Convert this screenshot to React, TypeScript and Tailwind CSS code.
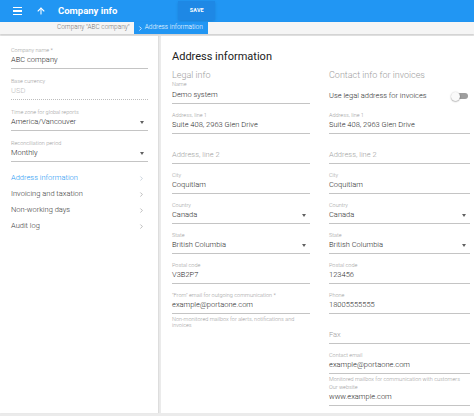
import { ArrowUp, ChevronRight } from "lucide-react";

type FieldProps = {
    label?: string;
    value?: string;
    placeholder?: string;
    select?: boolean;
    disabled?: boolean;
    dotted?: boolean;
    pad?: string;
    gap?: string;
};

function Field({ label, value, placeholder, select, disabled, dotted, pad = "pt-[7px]", gap = "mt-[1px]" }: FieldProps) {
    return (
        <div className={`${pad} pb-[3px] border-b ${dotted ? "border-dotted border-[#bdbdbd]" : "border-[#c4c4c4]"}`}>
            <div className="h-[8px] text-[5.5px] leading-[8px] font-light text-[#9e9e9e] whitespace-nowrap">{label}</div>
            <div className={`${gap} h-[10px] flex items-center justify-between text-[7.5px] leading-[10px] font-light`}>
                {placeholder ? (
                    <span className="text-[#a0a0a0]">{placeholder}</span>
                ) : (
                    <span className={disabled ? "text-[#bdbdbd]" : "text-[#2a2a2a]"}>{value}</span>
                )}
                {select && (
                    <span className="mr-[4px] w-0 h-0 border-l-[2.5px] border-r-[2.5px] border-t-[3px] border-l-transparent border-r-transparent border-t-[#616161]" />
                )}
            </div>
        </div>
    );
}

const nav = ["Address information", "Invoicing and taxation", "Non-working days", "Audit log"];

export default function App() {
    return (
        <div className="w-[474px] h-[416px] overflow-hidden flex flex-col bg-[#ebebeb] font-[Roboto,sans-serif]">
            {/* top bar */}
            <div className="h-[22px] bg-[#2196f3] flex items-center shrink-0">
                <div className="ml-[13px] w-[9px] flex flex-col gap-[2px]">
                    <span className="h-[1.5px] bg-white" />
                    <span className="h-[1.5px] bg-white" />
                    <span className="h-[1.5px] bg-white" />
                </div>
                <ArrowUp className="ml-[14px] text-white" size={10} strokeWidth={2.6} />
                <span className="ml-[12px] text-[9.5px] font-bold text-white">Company info</span>
                <button className="ml-[61px] h-[19px] w-[37px] self-start mt-[1px] bg-[#1e88e5] shadow-sm text-white text-[5.5px] font-bold tracking-wide">
                    SAVE
                </button>
            </div>

            {/* breadcrumbs */}
            <div className="h-[12px] bg-[#f5f5f5] flex items-center shrink-0 shadow-[0_1px_2px_rgba(0,0,0,0.15)] text-[6.5px] font-light">
                <span className="ml-[57px] text-[#757575]">Company "ABC company"</span>
                <div className="ml-[4px] h-full w-[74px] bg-[#2196f3] flex items-center text-white">
                    <ChevronRight className="ml-[3px]" size={7} strokeWidth={2.5} />
                    <span className="ml-[1px]">Address information</span>
                </div>
            </div>

            <div className="flex-1 flex gap-[3px] pt-[2px] pb-[3px]">
                {/* left panel */}
                <div className="w-[158px] bg-white pt-[2px] pl-[11px] pr-[10px] shadow-[1px_0_1px_rgba(0,0,0,0.06)]">
                    <Field pad="pt-[8px]" label="Company name *" value="ABC company" />
                    <Field pad="pt-[8px]" label="Base currency" value="USD" disabled dotted />
                    <Field pad="pt-[8px]" label="Time zone for global reports" value="America/Vancouver" select />
                    <Field pad="pt-[8px]" label="Reconciliation period" value="Monthly" select />
                    <div className="mt-[8px]">
                        {nav.map((item, i) => (
                            <div key={item} className="h-[16px] flex items-center justify-between text-[7.5px] font-light">
                                <span className={i === 0 ? "text-[#2196f3]" : "text-[#3a3a3a]"}>{item}</span>
                                <ChevronRight
                                    className={`mr-[3px] ${i === 0 ? "text-[#90a4b8]" : "text-[#757575]"}`}
                                    size={7}
                                    strokeWidth={1.6}
                                />
                            </div>
                        ))}
                    </div>
                </div>

                {/* main panel */}
                <div className="flex-1 bg-white pt-[14px] pl-[11px]">
                    <div className="h-[14px] text-[11px] leading-[14px] text-[#212121]">Address information</div>
                    <div className="mt-[6px] flex gap-[19px]">
                        <div className="w-[138px]">
                            <div className="h-[10px] text-[9px] leading-[10px] font-light text-[#9e9e9e]">Legal info</div>
                            <Field pad="pt-0" gap="mt-[2px]" label="Name" value="Demo system" />
                            <Field label="Address, line 1" value="Suite 408, 2963 Glen Drive" />
                            <Field placeholder="Address, line 2" />
                            <Field label="City" value="Coquitlam" />
                            <Field label="Country" value="Canada" select />
                            <Field label="State" value="British Columbia" select />
                            <Field label="Postal code" value="V3B2P7" />
                            <Field label={"\"From\" email for outgoing communication *"} value="example@portaone.com" />
                            <div className="pt-[2px] text-[5.5px] leading-[6px] font-light text-[#9e9e9e]">
                                Non-monitored mailbox for alerts, notifications and invoices
                            </div>
                        </div>
                        <div className="w-[141px]">
                            <div className="h-[10px] text-[9px] leading-[10px] font-light text-[#9e9e9e] whitespace-nowrap">
                                Contact info for invoices
                            </div>
                            <div className="pt-[10px] pb-[2px] h-[24px] flex items-center justify-between">
                                <span className="text-[7.5px] leading-[12px] font-light text-[#2a2a2a]">Use legal address for invoices</span>
                                <div className="relative w-[17px] h-[9px] mr-[2px]">
                                    <span className="absolute right-0 top-[1.5px] w-[14px] h-[6px] rounded-full bg-[#9e9e9e]" />
                                    <span className="absolute left-0 top-0 w-[9px] h-[9px] rounded-full bg-[#fafafa] shadow-[0_0.5px_1.5px_rgba(0,0,0,0.45)]" />
                                </div>
                            </div>
                            <Field label="Address, line 1" value="Suite 408, 2963 Glen Drive" />
                            <Field placeholder="Address, line 2" />
                            <Field label="City" value="Coquitlam" />
                            <Field label="Country" value="Canada" select />
                            <Field label="State" value="British Columbia" select />
                            <Field label="Postal code" value="123456" />
                            <Field label="Phone" value="18005555555" />
                            <Field placeholder="Fax" />
                            <Field label="Contact email" value="example@portaone.com" />
                            <div className="pt-[1px] h-[9px] text-[5.5px] leading-[8px] font-light text-[#9e9e9e] whitespace-nowrap">
                                Monitored mailbox for communication with customers
                            </div>
                            <Field pad="pt-0" label="Our website" value="www.example.com" />
                        </div>
                    </div>
                </div>
            </div>
        </div>
    );
}
